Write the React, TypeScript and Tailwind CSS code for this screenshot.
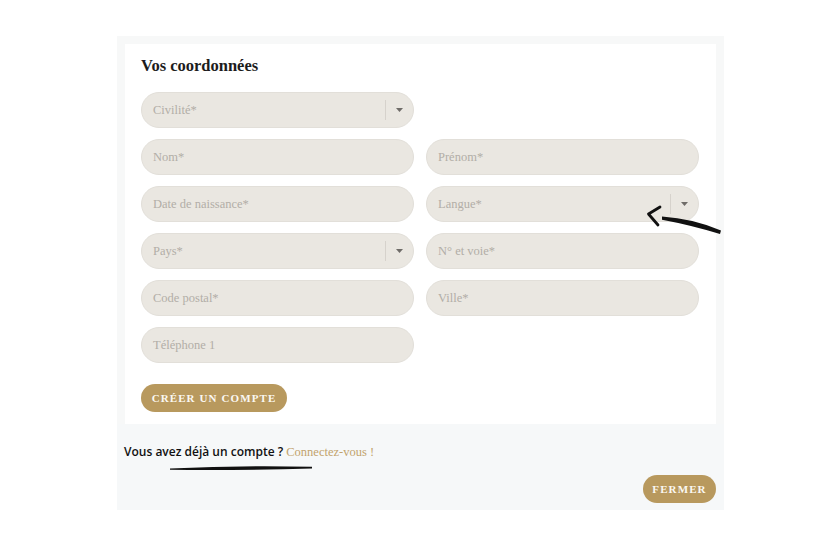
const serif = "font-['Liberation_Serif','DejaVu_Serif',serif]";

function Caret() {
  return (
    <svg width="7" height="4" viewBox="0 0 7 4" className="shrink-0">
      <path d="M0 0 L7 0 L3.5 4 Z" fill="#6f6c68" />
    </svg>
  );
}

function Field({ label, select = false }: { label: string; select?: boolean }) {
  return (
    <div className="flex h-[36px] items-center rounded-full border border-[#e2dfd9] bg-[#eae7e1] pl-[11px] pr-[10px]">
      <span className={`${serif} flex-1 text-[12.5px] text-[#b2aea7]`}>{label}</span>
      {select && (
        <div className="flex items-center gap-[10px]">
          <span className="h-[20px] w-px bg-[#d6d2cc]" />
          <Caret />
        </div>
      )}
    </div>
  );
}

export default function App() {
  const fields = [
    { label: "Civilité*", select: true },
    null,
    { label: "Nom*" },
    { label: "Prénom*" },
    { label: "Date de naissance*" },
    { label: "Langue*", select: true },
    { label: "Pays*", select: true },
    { label: "N° et voie*" },
    { label: "Code postal*" },
    { label: "Ville*" },
    { label: "Téléphone 1" },
  ];

  return (
    <div className="relative h-[545px] w-[840px] overflow-hidden bg-white">
      <div className="ml-[117px] mt-[36px] w-[607px] bg-[#f7f8f8]">
        <div className="px-[8px] pt-[8px]">
          <section className="bg-white pb-[12px] pl-[16px] pr-[17px] pt-[10px]">
            <h2 className={`${serif} mb-[14px] text-[16.5px] font-semibold leading-6 text-[#1c1c1c]`}>
              Vos coordonnées
            </h2>
            <div className="grid grid-cols-2 gap-x-[12px] gap-y-[11px]">
              {fields.map((f, i) =>
                f ? <Field key={i} label={f.label} select={f.select} /> : <div key={i} />
              )}
            </div>
            <button
              className={`${serif} mt-[21px] h-[28px] w-[146px] rounded-full bg-[#b8995e] text-[11px] font-semibold tracking-[1.1px] text-[#fbf8f2]`}
            >
              CRÉER UN COMPTE
            </button>
          </section>
        </div>
        <footer className="flex flex-col bg-[#f6f8f9] pb-[7px] pl-[7px] pr-[8px] pt-[20px]">
          <p className="text-[12px] font-semibold leading-4 text-[#111] font-['Open_Sans','DejaVu_Sans',sans-serif]">
            Vous avez déjà un compte ?{" "}
            <span className={`${serif} text-[12.5px] font-normal text-[#c2a36c]`}>Connectez-vous !</span>
          </p>
          <button
            className={`${serif} mt-[15px] h-[28px] w-[73px] self-end rounded-full bg-[#b8995e] text-[11px] font-semibold tracking-[1.1px] text-[#fbf8f2]`}
          >
            FERMER
          </button>
        </footer>
      </div>

      <svg className="pointer-events-none absolute left-0 top-0" width="840" height="545">
        <path
          d="M660 207 L648.5 214 L658 225"
          fill="none"
          stroke="#111"
          strokeWidth="2.8"
          strokeLinecap="round"
          strokeLinejoin="round"
        />
        <path d="M662 216.5 Q 693 218.5 721 230.5 L 720 234 Q 690 225 662 219.8 Z" fill="#111" />
        <path d="M170 468.6 Q 240 465 312 466.8 L 312 468.4 Q 240 470.6 170 469.8 Z" fill="#111" />
      </svg>
    </div>
  );
}
